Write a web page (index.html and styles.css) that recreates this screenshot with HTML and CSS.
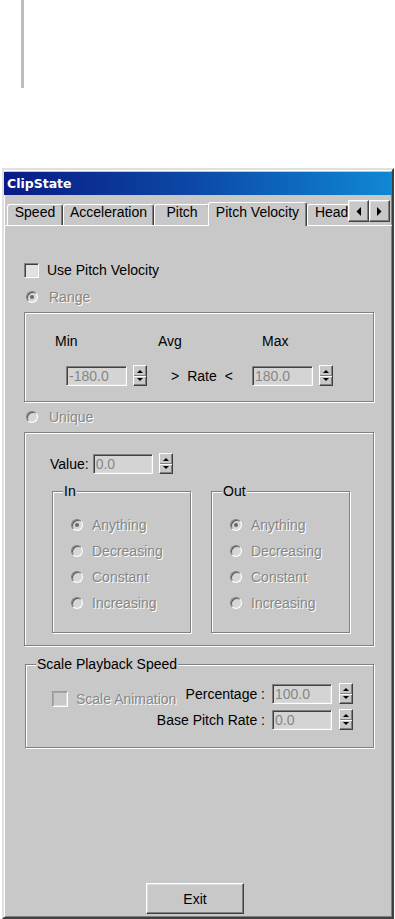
FILE: index.html
```html
<!DOCTYPE html>
<html lang="en">
<head>
    <meta charset="UTF-8">
    <meta name="viewport" content="width=device-width, initial-scale=1.0">
    <title>ClipState</title>
    <link rel="stylesheet" href="styles.css">
</head>
<body>
    <div class="edge-line"></div>

    <div class="window">
        <div class="titlebar">ClipState</div>

        <div class="tabstrip">
            <div class="tabs">
                <div class="tab tab-speed">Speed</div>
                <div class="tab tab-accel">Acceleration</div>
                <div class="tab tab-pitch">Pitch</div>
                <div class="tab tab-velocity active">Pitch Velocity</div>
                <div class="tab tab-heading">Heading</div>
            </div>
            <div class="tab-scroll">
                <button class="scroll-btn" type="button">
                    <svg width="5" height="9" viewBox="0 0 5 9"><polygon points="5,0 5,9 0.5,4.5" fill="#000"/></svg>
                </button>
                <button class="scroll-btn" type="button">
                    <svg width="5" height="9" viewBox="0 0 5 9"><polygon points="0,0 0,9 4.5,4.5" fill="#000"/></svg>
                </button>
            </div>
        </div>

        <div class="panel">
            <div class="check-row use-velocity">
                <span class="checkbox"></span>
                <span>Use Pitch Velocity</span>
            </div>

            <div class="radio-row top-radio">
                <span class="radio checked"></span>
                <span class="disabled">Range</span>
            </div>

            <div class="group range-group">
                <div class="range-labels">
                    <span class="lbl-min">Min</span>
                    <span class="lbl-avg">Avg</span>
                    <span>Max</span>
                </div>
                <div class="range-inputs">
                    <span class="field field-range">-180.0</span>
                    <span class="spinner"><svg width="12" height="19" viewBox="0 0 12 19"><polygon points="3,7 9,7 6,4" fill="#000"/><rect x="0" y="9" width="12" height="1" fill="#808080"/><rect x="0" y="10" width="12" height="1" fill="#fff"/><polygon points="3,12 9,12 6,15" fill="#000"/></svg></span>
                    <span class="rate-gt">&gt;</span>
                    <span class="rate-word">Rate</span>
                    <span class="rate-lt">&lt;</span>
                    <span class="field field-range field-max">180.0</span>
                    <span class="spinner"><svg width="12" height="19" viewBox="0 0 12 19"><polygon points="3,7 9,7 6,4" fill="#000"/><rect x="0" y="9" width="12" height="1" fill="#808080"/><rect x="0" y="10" width="12" height="1" fill="#fff"/><polygon points="3,12 9,12 6,15" fill="#000"/></svg></span>
                </div>
            </div>

            <div class="radio-row top-radio unique-radio">
                <span class="radio"></span>
                <span class="disabled">Unique</span>
            </div>

            <div class="group unique-group">
                <div class="value-row">
                    <span class="value-label">Value:</span>
                    <span class="field field-value">0.0</span>
                    <span class="spinner"><svg width="12" height="19" viewBox="0 0 12 19"><polygon points="3,7 9,7 6,4" fill="#000"/><rect x="0" y="9" width="12" height="1" fill="#808080"/><rect x="0" y="10" width="12" height="1" fill="#fff"/><polygon points="3,12 9,12 6,15" fill="#000"/></svg></span>
                </div>

                <div class="direction-row">
                    <div class="group direction-group">
                        <span class="group-title">In</span>
                        <div class="radio-row"><span class="radio checked"></span><span class="disabled">Anything</span></div>
                        <div class="radio-row"><span class="radio"></span><span class="disabled">Decreasing</span></div>
                        <div class="radio-row"><span class="radio"></span><span class="disabled">Constant</span></div>
                        <div class="radio-row"><span class="radio"></span><span class="disabled">Increasing</span></div>
                    </div>
                    <div class="group direction-group out-group">
                        <span class="group-title">Out</span>
                        <div class="radio-row"><span class="radio checked"></span><span class="disabled">Anything</span></div>
                        <div class="radio-row"><span class="radio"></span><span class="disabled">Decreasing</span></div>
                        <div class="radio-row"><span class="radio"></span><span class="disabled">Constant</span></div>
                        <div class="radio-row"><span class="radio"></span><span class="disabled">Increasing</span></div>
                    </div>
                </div>
            </div>

            <div class="group scale-group">
                <span class="group-title">Scale Playback Speed</span>
                <div class="check-row scale-check">
                    <span class="checkbox checkbox-off"></span>
                    <span class="disabled">Scale Animation</span>
                </div>
                <span class="scale-label">Percentage :</span>
                <span class="field">100.0</span>
                <span class="spinner"><svg width="12" height="19" viewBox="0 0 12 19"><polygon points="3,7 9,7 6,4" fill="#000"/><rect x="0" y="9" width="12" height="1" fill="#808080"/><rect x="0" y="10" width="12" height="1" fill="#fff"/><polygon points="3,12 9,12 6,15" fill="#000"/></svg></span>
                <span class="scale-label">Base Pitch Rate :</span>
                <span class="field">0.0</span>
                <span class="spinner"><svg width="12" height="19" viewBox="0 0 12 19"><polygon points="3,7 9,7 6,4" fill="#000"/><rect x="0" y="9" width="12" height="1" fill="#808080"/><rect x="0" y="10" width="12" height="1" fill="#fff"/><polygon points="3,12 9,12 6,15" fill="#000"/></svg></span>
            </div>

            <button class="exit-btn" type="button">Exit</button>
        </div>
    </div>
</body>
</html>
```

FILE: styles.css
```css
:root {
    --face: #c8c8c8;
    --shadow: #808080;
    --dark: #404040;
    --light: #dcdcdc;
    --disabled: #868686;
}

* {
    margin: 0;
    padding: 0;
    box-sizing: border-box;
}

body {
    background: #fff;
    color: #000;
    font-family: "Liberation Sans", Arial, sans-serif;
    font-size: 14px;
    line-height: 16px;
}

.edge-line {
    margin-left: 21px;
    width: 3px;
    height: 88px;
    background: #bdbdbd;
}

/* window frame */
.window {
    margin: 80px 0 0 2px;
    width: 392px;
    height: 751px;
    padding-top: 2px;
    background: var(--face);
    border: 2px solid;
    border-color: #e0e0e0 var(--dark) var(--dark) #e0e0e0;
    box-shadow: inset 1px 1px #fff, inset -1px -1px var(--shadow);
}

.titlebar {
    height: 23px;
    padding-left: 3px;
    background: linear-gradient(90deg, #0a1a84, #0c4aa8 50%, #1088d4);
    color: #fff;
    font-family: "DejaVu Sans", sans-serif;
    font-weight: bold;
    font-size: 12.5px;
    line-height: 23px;
}

/* tabs */
.tabstrip {
    display: flex;
    height: 31px;
    padding: 0 2px 0 3px;
    background: linear-gradient(#fff, #fff) left bottom / 100% 1px no-repeat;
}

.tabs {
    flex: 1;
    display: flex;
    align-items: flex-end;
    height: 31px;
    overflow: hidden;
}

.tab {
    flex: none;
    height: 21px;
    margin-bottom: 1px;
    text-align: center;
    line-height: 15px;
    white-space: nowrap;
    background: var(--face);
    border-top: 1px solid #fff;
    border-left: 1px solid #fff;
    border-right: 1px solid var(--dark);
    border-radius: 3px 3px 0 0;
    box-shadow: inset -1px 0 var(--shadow);
}

.tab-speed { width: 56px; }
.tab-accel { width: 91px; }
.tab-pitch { width: 56px; }
.tab-velocity { width: 99px; }
.tab-heading { width: 68px; }

.tab.active {
    position: relative;
    z-index: 1;
    height: 24px;
    margin: 0 0 0 -2px;
    padding-top: 2px;
}

.tab-scroll {
    display: flex;
    margin-top: 5px;
}

.scroll-btn {
    width: 21px;
    height: 22px;
    display: flex;
    align-items: center;
    justify-content: center;
    background: var(--face);
    border: 1px solid;
    border-color: #fff var(--dark) var(--dark) #fff;
    box-shadow: inset -1px -1px var(--shadow), inset 1px 1px var(--light);
}

/* panel */
.panel {
    padding-left: 20px;
}

.disabled {
    color: var(--disabled);
    text-shadow: 1px 1px #fff;
}

.check-row,
.radio-row {
    display: flex;
    align-items: center;
    height: 16px;
    white-space: nowrap;
}

.use-velocity {
    margin-top: 36px;
    gap: 8px;
}

.checkbox {
    flex: none;
    width: 15px;
    height: 15px;
    background: #e2e2e2;
    border: 1px solid;
    border-color: var(--shadow) #fff #fff var(--shadow);
    box-shadow: inset 1px 1px var(--dark), inset -1px -1px var(--light);
}

.checkbox-off {
    width: 16px;
    height: 16px;
    background: var(--face);
    border-color: #999 #fff #fff #999;
    box-shadow: inset 1px 1px #a8a8a8, inset -1px -1px var(--light);
}

.radio {
    position: relative;
    flex: none;
    width: 12px;
    height: 12px;
    border-radius: 50%;
    background: #d6d6d6;
    border: 1px solid;
    border-color: var(--shadow) #fff #fff var(--shadow);
    box-shadow: inset 1px 1px #5a5a5a, inset -1px -1px var(--light);
}

.radio.checked::after {
    content: "";
    position: absolute;
    left: 3px;
    top: 3px;
    width: 4px;
    height: 4px;
    border-radius: 50%;
    background: #6a6a6a;
}

.top-radio {
    margin-top: 11px;
    padding-left: 2px;
    gap: 11px;
}

.unique-radio {
    margin-top: 7px;
}

/* group boxes */
.group {
    position: relative;
    border: 1px solid var(--shadow);
    box-shadow: inset 1px 1px #fff, 1px 1px #fff;
}

.group-title {
    position: absolute;
    top: -9px;
    left: 10px;
    padding: 0 1px;
    background: var(--face);
    line-height: 16px;
    white-space: nowrap;
}

.range-group {
    width: 350px;
    height: 90px;
    margin-top: 7px;
    padding-top: 20px;
}

.range-labels {
    display: flex;
    padding-left: 30px;
}

.lbl-min { width: 103px; }
.lbl-avg { width: 104px; }

.range-inputs {
    display: flex;
    align-items: center;
    height: 21px;
    margin-top: 16px;
    padding-left: 41px;
}

.field {
    display: block;
    height: 20px;
    padding-left: 2px;
    line-height: 18px;
    color: var(--disabled);
    background: #d4d4d4;
    border: 1px solid;
    border-color: var(--shadow) #fff #fff var(--shadow);
    box-shadow: inset 1px 1px var(--dark), inset -1px -1px var(--light);
}

.field-range { width: 61px; }
.field-value { width: 60px; }

.spinner {
    display: block;
    flex: none;
    width: 14px;
    height: 21px;
    margin-left: 6px;
    background: var(--face);
    border: 1px solid;
    border-color: #fff var(--dark) var(--dark) #fff;
    box-shadow: inset -1px -1px var(--shadow);
}

.spinner svg {
    display: block;
}

.rate-gt { margin-left: 24px; }
.rate-word { margin-left: 8px; }
.rate-lt { margin-left: 8px; }
.field-max { margin-left: 19px; }

.unique-group {
    width: 350px;
    height: 214px;
    margin-top: 7px;
    padding-top: 20px;
}

.value-row {
    display: flex;
    align-items: center;
    height: 21px;
    padding-left: 25px;
}

.value-label {
    margin-right: 4px;
}

.direction-row {
    display: flex;
    gap: 20px;
    margin-top: 17px;
    padding-left: 27px;
}

.direction-group {
    width: 139px;
    height: 142px;
    padding: 25px 0 0 18px;
}

.direction-group .radio-row {
    gap: 9px;
}

.direction-group .radio-row + .radio-row {
    margin-top: 10px;
}

.scale-group {
    display: grid;
    grid-template-columns: 1fr auto 60px 14px;
    grid-auto-rows: 21px;
    column-gap: 7px;
    row-gap: 5px;
    align-items: center;
    width: 349px;
    height: 84px;
    margin: 18px 0 0 1px;
    padding: 18px 20px 0 26px;
}

.scale-check {
    grid-column: 1;
    grid-row: 1 / span 2;
    align-self: start;
    min-width: 0;
    margin-top: 8px;
    gap: 8px;
}

.scale-group .spinner {
    margin-left: 0;
}

.scale-label {
    text-align: right;
    white-space: nowrap;
}

.exit-btn {
    display: block;
    width: 98px;
    height: 31px;
    margin: 135px 0 0 122px;
    font-family: "Liberation Sans", Arial, sans-serif;
    font-size: 14px;
    color: #000;
    background: var(--face);
    border: 1px solid;
    border-color: #fff var(--dark) var(--dark) #fff;
    box-shadow: inset -1px -1px var(--shadow), inset 1px 1px var(--light);
}
```
